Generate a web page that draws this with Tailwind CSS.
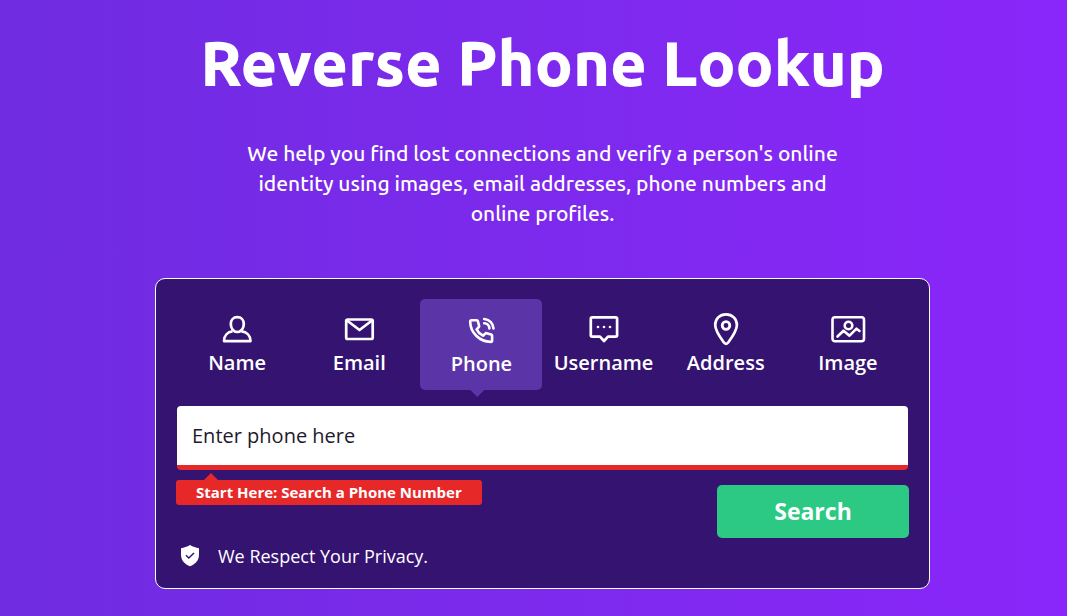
<!DOCTYPE html>
<html lang="en">
<head>
<meta charset="utf-8">
<meta name="viewport" content="width=device-width, initial-scale=1">
<title>Reverse Phone Lookup</title>
<script src="https://cdn.jsdelivr.net/npm/@tailwindcss/browser@4"></script>
</head>
<body class="min-h-screen bg-linear-to-r from-[#6f2ce0] to-[#8a26fa] pl-[18px] font-['Ubuntu','Open_Sans',sans-serif] text-white">
<main class="mx-auto flex max-w-[775px] flex-col pt-[23px] pb-6">
  <h1 class="text-center text-[63px] leading-[80px] font-extrabold whitespace-nowrap">Reverse Phone Lookup</h1>
  <p class="mx-auto mt-[35px] max-w-[630px] text-center text-[21px] leading-[30px] font-medium">We help you find lost connections and verify a person's online<br>identity using images, email addresses, phone numbers and<br>online profiles.</p>
  <form class="mt-[50px] rounded-[10px] border border-white bg-[#351371] px-5 pt-5 pb-5 font-['Open_Sans',sans-serif]">
    <div class="grid grid-cols-6 text-xl leading-[30px] font-semibold">
      <button type="button" class="flex flex-col items-center pt-[13px] pb-3">
        <svg class="size-9" viewBox="0 0 36 36" fill="none" stroke="currentColor" stroke-width="2.7" stroke-linejoin="round" aria-hidden="true"><path d="M18.300 5.200c-4 0-6.500 2.800-6.500 6.800 0 4.300 2.700 8 6.500 8s6.500-3.700 6.500-8c0-4-2.500-6.800-6.500-6.800ZM13.500 19.400C8.800 20 5 23.500 5 29.100h26.500c0-5.600-3.800-9.100-9-9.700"/></svg>
        Name
      </button>
      <button type="button" class="flex flex-col items-center pt-[13px] pb-3">
        <svg class="size-9" viewBox="0 0 36 36" fill="none" stroke="currentColor" stroke-width="2.7" stroke-linejoin="round" aria-hidden="true"><rect x="5.200" y="7.500" width="26.500" height="19.500" rx="1.500"/><path d="m6 8.500 12.500 9.500L31 8.500"/></svg>
        Email
      </button>
      <button type="button" aria-pressed="true" class="relative flex flex-col items-center rounded-[5px] bg-[#5b35a8] pt-[14px] pb-[11px]">
        <svg class="size-9" viewBox="0 0 36 36" fill="none" stroke="currentColor" stroke-width="2.600" stroke-linejoin="round" stroke-linecap="round" aria-hidden="true"><path d="M8.500 7.200h5.200c.6 0 1 .4 1.200 1l1.200 4.700c.1.500 0 .9-.4 1.200l-2.100 2.200c1.500 3 3.500 5 6.400 6.400l2.200-2.100c.4-.4.800-.5 1.300-.4l4.600 1.200c.6.200 1 .6 1 1.200v5c0 .8-.5 1.300-1.300 1.300C16.500 28.900 7.200 19.400 7.200 8.500c0-.8.500-1.300 1.300-1.300Z"/><path d="M21.200 6c5 .2 9 4.200 9.300 9.400M21.200 10.200c2.900.1 5 2.300 5.200 5.200"/></svg>
        Phone
        <span class="absolute top-full left-[50px] h-[7px] w-[14px] bg-[#5b35a8] [clip-path:polygon(0_0,100%_0,50%_100%)]"></span>
      </button>
      <button type="button" class="flex flex-col items-center pt-[13px] pb-3">
        <svg class="size-9" viewBox="0 0 36 36" fill="none" stroke="currentColor" stroke-width="2.700" stroke-linejoin="round" aria-hidden="true"><path d="M6.200 5.300h23.500c.8 0 1.400.6 1.400 1.400v16.500c0 .8-.6 1.400-1.400 1.400h-7.700L18 29l-4-4.400H6.200c-.8 0-1.400-.6-1.400-1.400V6.700c0-.8.600-1.400 1.400-1.400Z"/><g fill="currentColor" stroke="none"><circle cx="12" cy="15" r="1.300"/><circle cx="18" cy="15" r="1.300"/><circle cx="24" cy="15" r="1.300"/></g></svg>
        Username
      </button>
      <button type="button" class="flex flex-col items-center pt-[13px] pb-3">
        <svg class="size-9" viewBox="0 0 36 36" fill="none" stroke="currentColor" stroke-width="2.700" stroke-linejoin="round" aria-hidden="true"><path d="M18 2.300C11.700 2.300 7.200 7 7.200 13c0 5.300 3.700 10.700 8.500 17.300 1.500 2 3.200 2 4.700 0C25.200 23.700 28.900 18.300 28.900 13c0-6-4.600-10.700-10.900-10.700Z"/><circle cx="18" cy="13.500" r="3.800" stroke-width="2.800"/></svg>
        Address
      </button>
      <button type="button" class="flex flex-col items-center pt-[13px] pb-3">
        <svg class="size-9" viewBox="0 0 36 36" fill="none" stroke="currentColor" stroke-width="2.600" stroke-linejoin="round" stroke-linecap="round" aria-hidden="true"><rect x="2.500" y="5.300" width="31.500" height="24" rx="2.500"/><circle cx="18.500" cy="13.500" r="3.800"/><path d="m7.500 24.500 6-5.800 6 5 7-7 3 2.300"/></svg>
        Image
      </button>
    </div>
    <div class="mt-4 px-px">
      <input type="tel" aria-label="Phone number" placeholder="Enter phone here" class="block h-16 w-full rounded-[4px] border-b-[5px] border-[#e62828] bg-white px-[15px] text-xl text-[#221a2c] outline-none placeholder:text-[#221a2c]">
    </div>
    <div class="flex items-start justify-between pt-[10px]">
      <div class="relative rounded-[3px] bg-[#e62828] px-5 text-[15px] leading-[25px] font-bold whitespace-nowrap">
        <span class="absolute bottom-full left-7 h-[7px] w-[14px] bg-[#e62828] [clip-path:polygon(50%_0,100%_100%,0_100%)]"></span>
        Start Here: Search a Phone Number
      </div>
      <button type="submit" class="mt-[5px] h-[53px] w-48 rounded-[5px] bg-[#2bc983] text-[23px] font-bold">Search</button>
    </div>
    <div class="flex items-center gap-[18px] pt-[6px] pl-1 text-lg leading-6">
      <svg class="h-6 w-5" viewBox="0 0 20 24" aria-hidden="true"><path fill="currentColor" d="M10 1c3 2 6 2.500 9 3.200v6.300c0 6.300-4 9.700-9 11.700C5 20.200 1 16.800 1 10.500V4.200c3-.7 6-1.200 9-3.200Z"/><path d="m6 11.300 2.800 2.700 5.200-5" fill="none" stroke="#351371" stroke-width="1.500"/></svg>
      <span>We Respect Your Privacy.</span>
    </div>
  </form>
</main>
</body>
</html>
